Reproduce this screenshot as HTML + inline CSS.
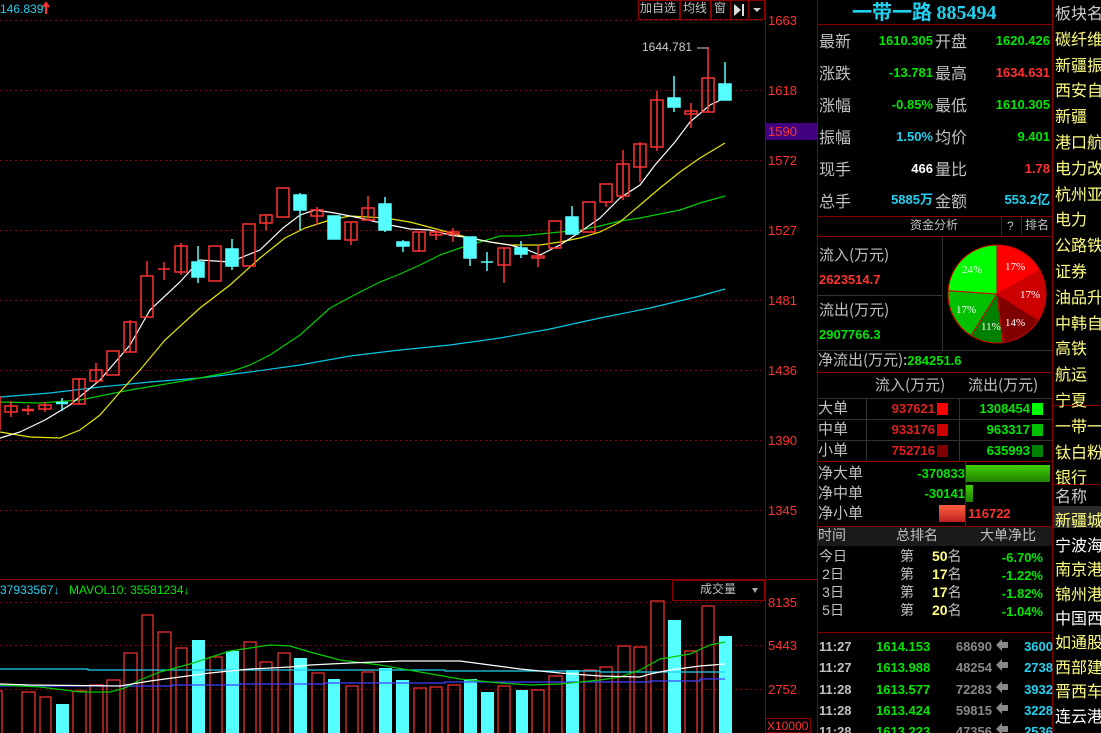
<!DOCTYPE html>
<html><head><meta charset="utf-8"><style>
*{margin:0;padding:0;box-sizing:border-box}
html,body{width:1101px;height:733px;background:#000;overflow:hidden;}
body{position:relative;font-family:"Liberation Sans","Noto Sans CJK SC",sans-serif;}
.t{position:absolute;white-space:nowrap;line-height:1;}
.cj{font-family:"Noto Sans CJK SC","WenQuanYi Zen Hei",sans-serif;}
.g{color:#c0c0c0}.gr{color:#00e600}.rd{color:#ff3232}.cy{color:#22d0f0}.w{color:#fff}.y{color:#ffff80}
.r{text-align:right}
.b{font-weight:bold}
</style></head><body>
<svg width="1101" height="733" style="position:absolute;left:0;top:0" xmlns="http://www.w3.org/2000/svg">
<g stroke="#8a0000" stroke-dasharray="2,3" stroke-width="1">
<line x1="0" y1="20.5" x2="765" y2="20.5"/><line x1="0" y1="90.5" x2="765" y2="90.5"/><line x1="0" y1="160.5" x2="765" y2="160.5"/><line x1="0" y1="230.5" x2="765" y2="230.5"/><line x1="0" y1="300.5" x2="765" y2="300.5"/><line x1="0" y1="370.5" x2="765" y2="370.5"/><line x1="0" y1="440.5" x2="765" y2="440.5"/><line x1="0" y1="510.5" x2="765" y2="510.5"/>
<line x1="0" y1="602.5" x2="765" y2="602.5"/><line x1="0" y1="645.5" x2="765" y2="645.5"/><line x1="0" y1="689.5" x2="765" y2="689.5"/>
</g>
<g stroke="#8a0000" fill="none">
<line x1="765.5" y1="0" x2="765.5" y2="733"/>
<line x1="817.5" y1="0" x2="817.5" y2="733"/>
<line x1="0" y1="579.5" x2="817" y2="579.5"/>
<rect x="672.5" y="580.5" width="92" height="20"/>
<rect x="765.5" y="718.5" width="45" height="14"/>
</g>
<rect x="766" y="123" width="51" height="17" fill="#400080"/>
<g fill="none" stroke-width="1.2">
<polyline stroke="#00c8e6" points="0,397 50,393 100,387 150,382 200,378 250,372 300,365 350,356 400,350 450,345 500,338 550,329 600,318 650,308 700,296 725,289"/>
<polyline stroke="#00cc00" points="0,402 40,403 80,400 100,396 130,390 160,385 200,378 230,372 250,365 270,355 300,335 330,308 360,292 380,282 400,274 420,265 440,255 460,248 480,242 500,236 520,236 540,234 560,232 580,230 600,226 620,221 640,218 660,214 680,210 700,203 725,196"/>
<polyline stroke="#e6e600" points="0,432 30,437 60,438 80,430 100,415 120,392 140,370 165,340 200,308 230,285 260,258 285,238 305,228 330,220 350,216 385,218 410,222 440,230 470,238 490,242 510,245 540,245 560,242 580,238 600,232 620,222 640,205 660,188 680,172 700,158 725,143"/>
<polyline stroke="#fff" points="0,438 20,432 45,420 70,405 100,380 130,345 150,310 180,282 200,260 230,262 260,250 283,228 300,215 315,210 335,213 360,218 385,224 410,229 430,230 450,235 470,238 490,242 510,245 525,249 540,255 560,245 580,232 600,218 620,198 640,185 655,165 675,142 690,122 710,105 725,98"/>
</g>
<g stroke="#ff3232" fill="none" stroke-width="1.5">
<line x1="0" y1="396" x2="0" y2="430"/>
<line x1="11" y1="401" x2="11" y2="417"/><rect x="5" y="406" width="12" height="6"/>
<line x1="22" y1="410" x2="34" y2="410" stroke-width="2.5"/><line x1="28" y1="405" x2="28" y2="415"/>
<line x1="45" y1="402" x2="45" y2="412"/><rect x="39" y="405" width="12" height="4"/>
<line x1="79" y1="378" x2="79" y2="404"/><rect x="73" y="379" width="12" height="25"/>
<line x1="96" y1="363" x2="96" y2="383"/><rect x="90" y="370" width="12" height="11"/>
<rect x="107" y="351" width="12" height="24"/>
<line x1="130" y1="320" x2="130" y2="352"/><rect x="124" y="322" width="12" height="30"/>
<line x1="147" y1="261" x2="147" y2="276"/><rect x="141" y="276" width="12" height="41"/>
<line x1="158" y1="269" x2="170" y2="269"/><line x1="164" y1="262" x2="164" y2="280"/>
<line x1="181" y1="243" x2="181" y2="275"/><rect x="175" y="246" width="12" height="26"/>
<rect x="209" y="246" width="12" height="35"/>
<rect x="243" y="224" width="12" height="42"/>
<line x1="266" y1="215" x2="266" y2="230"/><rect x="260" y="215" width="12" height="8"/>
<rect x="277" y="188" width="12" height="29"/>
<line x1="317" y1="207" x2="317" y2="225"/><rect x="311" y="210" width="12" height="6"/>
<line x1="351" y1="222" x2="351" y2="245"/><rect x="345" y="222" width="12" height="18"/>
<line x1="368" y1="196" x2="368" y2="220"/><rect x="362" y="208" width="12" height="12"/>
<line x1="419" y1="232" x2="419" y2="251"/><rect x="413" y="232" width="12" height="19"/>
<line x1="436" y1="229" x2="436" y2="240"/><rect x="430" y="232" width="12" height="3"/>
<line x1="453" y1="228" x2="453" y2="242"/><rect x="447" y="232" width="12" height="2"/>
<line x1="504" y1="248" x2="504" y2="283"/><rect x="498" y="248" width="12" height="17"/>
<line x1="538" y1="245" x2="538" y2="267"/><rect x="532" y="256" width="12" height="2"/>
<rect x="549" y="221" width="12" height="27"/>
<rect x="583" y="202" width="12" height="30"/>
<line x1="606" y1="202" x2="606" y2="207"/><rect x="600" y="184" width="12" height="18"/>
<line x1="623" y1="150" x2="623" y2="200"/><rect x="617" y="164" width="12" height="32"/>
<line x1="640" y1="142" x2="640" y2="182"/><rect x="634" y="144" width="12" height="23"/>
<line x1="657" y1="91" x2="657" y2="151"/><rect x="651" y="100" width="12" height="47"/>
<line x1="691" y1="103" x2="691" y2="128"/><rect x="685" y="111" width="12" height="3"/>
<line x1="708" y1="47" x2="708" y2="112"/><rect x="702" y="78" width="12" height="34"/>
</g>
<g stroke="#55ffff" fill="#55ffff" stroke-width="1.5">
<line x1="56" y1="403" x2="68" y2="403" stroke-width="2.5"/><line x1="62" y1="398" x2="62" y2="411"/>
<line x1="198" y1="246" x2="198" y2="283"/><rect x="192" y="262" width="12" height="15"/>
<line x1="232" y1="239" x2="232" y2="270"/><rect x="226" y="249" width="12" height="17"/>
<line x1="300" y1="193" x2="300" y2="230"/><rect x="294" y="195" width="12" height="15"/>
<rect x="328" y="216" width="12" height="23"/>
<line x1="385" y1="197" x2="385" y2="232"/><rect x="379" y="204" width="12" height="26"/>
<line x1="403" y1="240" x2="403" y2="252"/><rect x="397" y="242" width="12" height="4"/>
<line x1="470" y1="237" x2="470" y2="266"/><rect x="464" y="237" width="12" height="21"/>
<line x1="481" y1="262" x2="493" y2="262"/><line x1="487" y1="252" x2="487" y2="271"/>
<line x1="521" y1="241" x2="521" y2="258"/><rect x="515" y="248" width="12" height="6"/>
<line x1="572" y1="206" x2="572" y2="234"/><rect x="566" y="217" width="12" height="17"/>
<line x1="674" y1="76" x2="674" y2="112"/><rect x="668" y="98" width="12" height="9"/>
<line x1="725" y1="62" x2="725" y2="100"/><rect x="719" y="84" width="12" height="16"/>
</g>
<line x1="697" y1="48" x2="708" y2="48" stroke="#ccc"/>
<g stroke="#ff3232" fill="none" stroke-width="1.2">
<rect x="-3" y="691" width="5" height="50"/><rect x="22" y="692" width="13" height="50"/><rect x="40" y="697" width="11" height="50"/><rect x="73" y="691" width="13" height="50"/><rect x="90" y="685" width="13" height="50"/><rect x="107" y="680" width="13" height="60"/><rect x="124" y="653" width="13" height="90"/><rect x="142" y="615" width="11" height="130"/><rect x="158" y="632" width="13" height="110"/><rect x="176" y="648" width="11" height="100"/><rect x="210" y="657" width="12" height="90"/><rect x="244" y="642" width="12" height="100"/><rect x="260" y="662" width="12" height="80"/><rect x="278" y="653" width="12" height="90"/><rect x="312" y="673" width="12" height="70"/><rect x="346" y="686" width="12" height="60"/><rect x="362" y="672" width="12" height="70"/><rect x="414" y="688" width="12" height="60"/><rect x="430" y="687" width="12" height="60"/><rect x="448" y="685" width="12" height="60"/><rect x="498" y="686" width="12" height="60"/><rect x="532" y="690" width="12" height="60"/><rect x="549" y="676" width="13" height="60"/><rect x="584" y="670" width="12" height="70"/><rect x="600" y="667" width="12" height="70"/><rect x="618" y="646" width="12" height="90"/><rect x="634" y="647" width="12" height="90"/><rect x="651" y="601" width="13" height="140"/><rect x="685" y="651" width="12" height="90"/><rect x="702" y="606" width="12" height="140"/>
</g>
<g fill="#55ffff">
<rect x="56" y="704" width="13" height="30"/><rect x="192" y="640" width="13" height="95"/><rect x="226" y="651" width="13" height="85"/><rect x="294" y="658" width="13" height="80"/><rect x="328" y="679" width="12" height="60"/><rect x="379" y="668" width="13" height="70"/><rect x="396" y="680" width="13" height="60"/><rect x="464" y="679" width="13" height="60"/><rect x="481" y="692" width="13" height="50"/><rect x="516" y="690" width="12" height="50"/><rect x="566" y="670" width="13" height="70"/><rect x="668" y="620" width="13" height="120"/><rect x="719" y="636" width="13" height="100"/>
</g>
<g fill="none" stroke-width="1.2">
<polyline stroke="#22d0f0" points="0,669 88,669 88,670 445,670 445,671 600,671 600,672 725,672"/>
<polyline stroke="#4040ff" points="0,686 172,686 172,685 240,685 240,684 325,684 325,683 445,683 445,682 650,682 650,681 700,681 700,679 725,679"/>
<polyline stroke="#00cc00" points="0,685 40,687 80,692 110,692 125,688 140,680 160,672 190,664 230,651 270,645 290,646 310,652 340,660 380,665 420,672 460,679 500,683 530,685 560,684 600,680 620,677 640,670 660,659 690,654 710,645 725,642"/>
<polyline stroke="#fff" points="0,684 30,685 120,686 150,681 180,677 210,673 250,669 290,667 310,665 350,663 400,661 460,661 490,665 520,669 560,673 600,676 640,677 650,674 670,670 700,666 725,664"/>
</g>
<g stroke="#8a0000" fill="none"><rect x="638.5" y="0.5" width="41" height="19"/><rect x="680.5" y="0.5" width="30" height="19"/><rect x="711.5" y="0.5" width="19" height="19"/><rect x="730.5" y="0.5" width="18" height="19"/><rect x="748.5" y="0.5" width="16" height="19"/></g>
<path d="M734 4 L741 10 L734 16Z" fill="#ddd"/><rect x="742" y="4" width="2" height="12" fill="#ddd"/>
<path d="M753 8 L761 8 L757 12Z" fill="#ccc"/>
<path d="M752 588 L758 588 L755 593Z" fill="#aaa"/>
<path d="M46 4 v10 M43 7 l3-4 3 4" stroke="#ff3232" stroke-width="2" fill="none"/>
<g stroke="#8a0000" fill="none">
<line x1="817" y1="24.5" x2="1052" y2="24.5"/>
<line x1="1052.5" y1="0" x2="1052.5" y2="733"/>
<line x1="817" y1="216.5" x2="1052" y2="216.5"/>
<line x1="817" y1="236.5" x2="1052" y2="236.5"/>
<line x1="1001.5" y1="216" x2="1001.5" y2="236"/><line x1="1021.5" y1="216" x2="1021.5" y2="236"/>
<line x1="817" y1="372.5" x2="1052" y2="372.5"/>
<line x1="817" y1="461.5" x2="1052" y2="461.5"/>
<line x1="817" y1="526.5" x2="1052" y2="526.5"/>
<line x1="817" y1="632.5" x2="1052" y2="632.5"/>
<line x1="1052" y1="484.5" x2="1101" y2="484.5"/>
<line x1="1052" y1="405.5" x2="1101" y2="405.5"/>
</g>
<g stroke="#333" fill="none">
<line x1="942.5" y1="237" x2="942.5" y2="350"/>
<line x1="817" y1="295.5" x2="942" y2="295.5"/>
<line x1="817" y1="350.5" x2="1052" y2="350.5"/>
<line x1="817" y1="398.5" x2="1052" y2="398.5"/>
<line x1="817" y1="419.5" x2="1052" y2="419.5"/>
<line x1="817" y1="440.5" x2="1052" y2="440.5"/>
<line x1="866.5" y1="398" x2="866.5" y2="461"/>
<line x1="959.5" y1="398" x2="959.5" y2="461"/>
<line x1="965.5" y1="461" x2="965.5" y2="526"/>
</g>
<rect x="818" y="527" width="234" height="19" fill="#1a1a1a"/>
<rect x="1053" y="506" width="48" height="22" fill="#2a2a2a"/>
<g stroke="#c00" stroke-width="1">
<path d="M997,294 L997,245 A49,49 0 0 1 1039.9,270.2Z" fill="#ff0000"/>
<path d="M997,294 L1039.9,270.2 A49,49 0 0 1 1038.6,320Z" fill="#cc0000"/>
<path d="M997,294 L1038.6,320 A49,49 0 0 1 1003,342.6Z" fill="#800000"/>
<path d="M997,294 L1003,342.6 A49,49 0 0 1 971,335.6Z" fill="#008000"/>
<path d="M997,294 L971,335.6 A49,49 0 0 1 948.1,290.6Z" fill="#00c000"/>
<path d="M997,294 L948.1,290.6 A49,49 0 0 1 997,245Z" fill="#00ff00"/>
</g>
<g fill="#fff" font-size="11" font-family="Liberation Serif,serif">
<text x="1005" y="270">17%</text><text x="1020" y="298">17%</text><text x="1005" y="326">14%</text><text x="981" y="330">11%</text><text x="956" y="313">17%</text><text x="962" y="273">24%</text>
</g>
<defs><linearGradient id="gg" x1="0" y1="0" x2="0" y2="1"><stop offset="0" stop-color="#40d000"/><stop offset="1" stop-color="#208000"/></linearGradient>
<linearGradient id="rg" x1="0" y1="0" x2="0" y2="1"><stop offset="0" stop-color="#ff6040"/><stop offset="1" stop-color="#c02020"/></linearGradient></defs>
<rect x="966" y="465" width="84" height="17" fill="url(#gg)"/>
<rect x="966" y="485" width="7" height="17" fill="url(#gg)"/>
<rect x="939" y="505" width="26" height="17" fill="url(#rg)"/>
<rect x="937" y="403" width="11" height="12" fill="#ff0000"/><rect x="937" y="424" width="11" height="12" fill="#cc0000"/><rect x="937" y="445" width="11" height="12" fill="#800000"/>
<rect x="1032" y="403" width="11" height="12" fill="#00ff00"/><rect x="1032" y="424" width="11" height="12" fill="#00c000"/><rect x="1032" y="445" width="11" height="12" fill="#008000"/>
<g fill="#888"><path d="M996 645 l6-6 v3 h6 v6 h-6 v3z"/><path d="M996 665 l6-6 v3 h6 v6 h-6 v3z"/><path d="M996 687 l6-6 v3 h6 v6 h-6 v3z"/><path d="M996 708 l6-6 v3 h6 v6 h-6 v3z"/><path d="M996 729 l6-6 v3 h6 v6 h-6 v3z"/></g>
</svg>

<div class="t cy" style="left:0;top:3px;font-size:12px">146.839</div>
<div class="t g cj" style="left:640px;top:2px;font-size:12px">加自选</div>
<div class="t g cj" style="left:683px;top:2px;font-size:12px">均线</div>
<div class="t g cj" style="left:714px;top:2px;font-size:12px">窗</div>
<div class="t" style="left:642px;top:41px;font-size:12px;color:#ccc">1644.781</div>
<div class="t rd" style="left:768px;top:14px;font-size:13px">1663</div>
<div class="t rd" style="left:768px;top:84px;font-size:13px">1618</div>
<div class="t rd" style="left:768px;top:125px;font-size:13px">1590</div>
<div class="t rd" style="left:768px;top:154px;font-size:13px">1572</div>
<div class="t rd" style="left:768px;top:224px;font-size:13px">1527</div>
<div class="t rd" style="left:768px;top:294px;font-size:13px">1481</div>
<div class="t rd" style="left:768px;top:364px;font-size:13px">1436</div>
<div class="t rd" style="left:768px;top:434px;font-size:13px">1390</div>
<div class="t rd" style="left:768px;top:504px;font-size:13px">1345</div>
<div class="t rd" style="left:768px;top:596px;font-size:13px">8135</div>
<div class="t rd" style="left:768px;top:639px;font-size:13px">5443</div>
<div class="t rd" style="left:768px;top:683px;font-size:13px">2752</div>
<div class="t rd" style="left:767px;top:720px;font-size:12px">X10000</div>
<div class="t cy" style="left:0;top:584px;font-size:12px">37933567↓</div>
<div class="t gr" style="left:69px;top:584px;font-size:12px">MAVOL10: 35581234↓</div>
<div class="t g cj" style="left:700px;top:583px;font-size:12px">成交量</div>

<div class="t cy b cj" style="left:852px;top:1px;font-size:20px">一带一路 <span style="font-family:'Liberation Serif',serif">885494</span></div>

<div class="t g cj" style="left:935px;top:32px;font-size:16px">开盘</div>
<div class="t g cj" style="left:935px;top:64px;font-size:16px">最高</div>
<div class="t g cj" style="left:935px;top:96px;font-size:16px">最低</div>
<div class="t g cj" style="left:935px;top:128px;font-size:16px">均价</div>
<div class="t g cj" style="left:935px;top:160px;font-size:16px">量比</div>
<div class="t g cj" style="left:935px;top:192px;font-size:16px">金额</div>
<div class="t g cj" style="left:819px;top:32px;font-size:16px">最新</div>
<div class="t g cj" style="left:819px;top:64px;font-size:16px">涨跌</div>
<div class="t g cj" style="left:819px;top:96px;font-size:16px">涨幅</div>
<div class="t g cj" style="left:819px;top:128px;font-size:16px">振幅</div>
<div class="t g cj" style="left:819px;top:160px;font-size:16px">现手</div>
<div class="t g cj" style="left:819px;top:192px;font-size:16px">总手</div>
<div class="t gr b r" style="right:168px;top:34px;font-size:13px">1610.305</div>
<div class="t gr b r" style="right:168px;top:66px;font-size:13px">-13.781</div>
<div class="t gr b r" style="right:168px;top:98px;font-size:13px">-0.85%</div>
<div class="t cy b r" style="right:168px;top:130px;font-size:13px">1.50%</div>
<div class="t w b r" style="right:168px;top:162px;font-size:13px">466</div>
<div class="t cy b r cj" style="right:168px;top:192px;font-size:13px"><span style="font-family:'Liberation Sans'">5885</span>万</div>
<div class="t gr b r" style="right:51px;top:34px;font-size:13px">1620.426</div>
<div class="t rd b r" style="right:51px;top:66px;font-size:13px">1634.631</div>
<div class="t gr b r" style="right:51px;top:98px;font-size:13px">1610.305</div>
<div class="t gr b r" style="right:51px;top:130px;font-size:13px">9.401</div>
<div class="t rd b r" style="right:51px;top:162px;font-size:13px">1.78</div>
<div class="t cy b r cj" style="right:51px;top:192px;font-size:13px"><span style="font-family:'Liberation Sans'">553.2</span>亿</div>
<div class="t g cj" style="left:910px;top:219px;font-size:12px">资金分析</div>
<div class="t g" style="left:1007px;top:220px;font-size:12px">?</div>
<div class="t g cj" style="left:1025px;top:219px;font-size:12px">排名</div>
<div class="t g cj" style="left:819px;top:247px;font-size:15px">流入(万元)</div>
<div class="t rd b" style="left:819px;top:273px;font-size:13px">2623514.7</div>
<div class="t g cj" style="left:819px;top:302px;font-size:15px">流出(万元)</div>
<div class="t gr b" style="left:819px;top:328px;font-size:13px">2907766.3</div>
<div class="t g cj" style="left:818px;top:352px;font-size:15px">净流出(万元):<span class="gr b" style="font-family:'Liberation Sans';font-size:13px">284251.6</span></div>
<div class="t g cj" style="left:875px;top:377px;font-size:15px">流入(万元)</div>
<div class="t g cj" style="left:968px;top:377px;font-size:15px">流出(万元)</div>
<div class="t g cj" style="left:818px;top:400px;font-size:15px">大单</div>
<div class="t g cj" style="left:818px;top:421px;font-size:15px">中单</div>
<div class="t g cj" style="left:818px;top:442px;font-size:15px">小单</div>
<div class="t b r" style="right:166px;top:402px;font-size:13px;color:#e02020">937621</div>
<div class="t b r" style="right:166px;top:423px;font-size:13px;color:#e02020">933176</div>
<div class="t b r" style="right:166px;top:444px;font-size:13px;color:#e02020">752716</div>
<div class="t gr b r" style="right:71px;top:402px;font-size:13px">1308454</div>
<div class="t gr b r" style="right:71px;top:423px;font-size:13px">963317</div>
<div class="t gr b r" style="right:71px;top:444px;font-size:13px">635993</div>
<div class="t g cj" style="left:818px;top:465px;font-size:15px">净大单</div>
<div class="t g cj" style="left:818px;top:485px;font-size:15px">净中单</div>
<div class="t g cj" style="left:818px;top:505px;font-size:15px">净小单</div>
<div class="t gr b r" style="right:136px;top:467px;font-size:13px">-370833</div>
<div class="t gr b r" style="right:136px;top:487px;font-size:13px">-30141</div>
<div class="t rd b" style="left:968px;top:507px;font-size:13px">116722</div>
<div class="t g cj" style="left:818px;top:528px;font-size:14px">时间</div>
<div class="t g cj" style="left:896px;top:528px;font-size:14px">总排名</div>
<div class="t g cj" style="left:980px;top:528px;font-size:14px">大单净比</div>
<div class="t g cj" style="left:819px;top:547px;font-size:14px;line-height:18px">今日<br>&nbsp;<span style="font-family:'Liberation Sans'">2</span>日<br>&nbsp;<span style="font-family:'Liberation Sans'">3</span>日<br>&nbsp;<span style="font-family:'Liberation Sans'">5</span>日</div>
<div class="t g cj" style="left:900px;top:547px;font-size:14px;line-height:18px">第<br>第<br>第<br>第</div>
<div class="t g cj" style="left:932px;top:547px;font-size:14px;line-height:18px"><span class="y b" style="font-family:'Liberation Sans'">50</span>名<br><span class="y b" style="font-family:'Liberation Sans'">17</span>名<br><span class="y b" style="font-family:'Liberation Sans'">17</span>名<br><span class="y b" style="font-family:'Liberation Sans'">20</span>名</div>
<div class="t gr b r" style="right:58px;top:549px;font-size:13px;line-height:18px">-6.70%<br>-1.22%<br>-1.82%<br>-1.04%</div>
<div class="t b" style="left:819px;top:636px;font-size:13px;line-height:21.3px;color:#c0c0c0">11:27<br>11:27<br>11:28<br>11:28<br>11:28</div>
<div class="t gr b" style="left:876px;top:636px;font-size:13px;line-height:21.3px">1614.153<br>1613.988<br>1613.577<br>1613.424<br>1613.223</div>
<div class="t b r" style="right:109px;top:636px;font-size:13px;line-height:21.3px;color:#888">68690<br>48254<br>72283<br>59815<br>47356</div>
<div class="t cy b r" style="right:48px;top:636px;font-size:13px;line-height:21.3px">3600<br>2738<br>3932<br>3228<br>2536</div>

<div class="t cj" style="left:1055px;top:0px;font-size:16px;line-height:25.8px;color:#ccc;width:46px;overflow:hidden">板块名<br><span class="y">碳纤维<br>新疆振<br>西安自<br>新疆<br>港口航<br>电力改<br>杭州亚<br>电力<br>公路铁<br>证券<br>油品升<br>中韩自<br>高铁<br>航运<br>宁夏<br>一带一<br>钛白粉<br>银行</span></div>
<div class="t cj" style="left:1055px;top:483px;font-size:16px;line-height:24.4px;width:46px;overflow:hidden;color:#ccc">名称<br><span class="y">新疆城</span><br><span class="w">宁波海</span><br><span class="y">南京港</span><br><span class="y">锦州港</span><br><span class="w">中国西</span><br><span class="y">如通股</span><br><span class="y">西部建</span><br><span class="y">晋西车</span><br><span class="w">连云港</span></div>
</body></html>
